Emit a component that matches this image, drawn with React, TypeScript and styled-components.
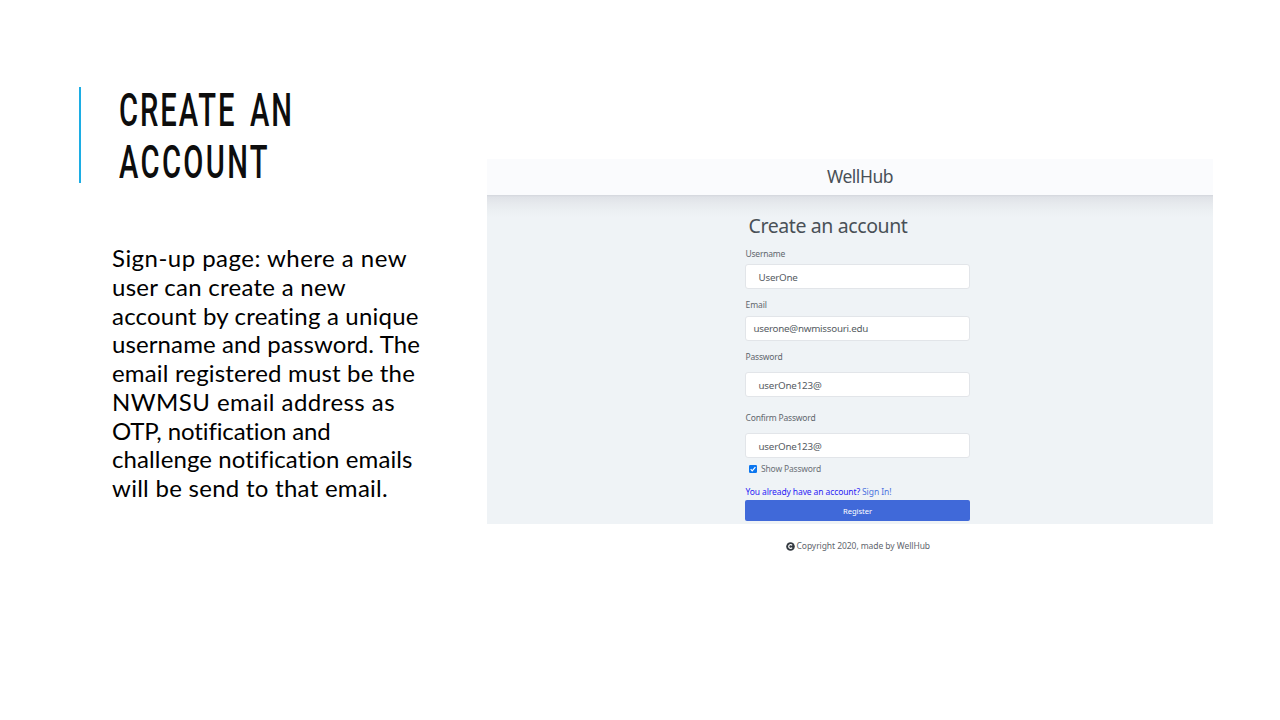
import React, { useLayoutEffect, useRef, useState } from "react";
import styled, { createGlobalStyle } from "styled-components";

const GlobalStyle = createGlobalStyle`
  *, *::before, *::after { box-sizing: border-box; }
  body { margin: 0; background: #fff; }
`;

const uiFont = `"Noto Sans", "Open Sans", sans-serif`;
const titleScale = 0.62;

const FitText = styled.span`
  display: inline-block;
  white-space: pre;
`;

/* Tracks a run of text so that it fills the given width. */
function Fit({ width, children }: { width: number; children: string }) {
  const ref = useRef<HTMLSpanElement>(null);
  const [spacing, setSpacing] = useState(0);
  useLayoutEffect(() => {
    const el = ref.current;
    if (!el) return;
    el.style.letterSpacing = "0px";
    const natural = parseFloat(getComputedStyle(el).width);
    const next = (width - natural) / children.length;
    el.style.letterSpacing = `${next}px`;
    setSpacing(next);
  }, [width, children]);
  return (
    <FitText ref={ref} style={{ letterSpacing: `${spacing}px` }}>
      {children}
    </FitText>
  );
}

const Slide = styled.main`
  display: flex;
  width: 1280px;
  height: 720px;
  overflow: hidden;
  background: #fff;
`;

const TextColumn = styled.section`
  width: 487px;
  padding: 87px 0 0 79px;
`;

const TitleBlock = styled.div`
  display: flex;
  align-items: flex-start;
  height: 96px;
  border-left: 2px solid #1cade4;
  padding-left: 38px;
`;

const Title = styled.h1`
  flex: none;
  margin: -3px 0 0;
  font: 500 47px/52px Roboto, sans-serif;
  color: #0d0d0d;
  width: 340px;
  word-spacing: 7px;
  transform: scaleX(${titleScale});
  transform-origin: 0 0;
`;

const TitleLine = styled.span`
  display: block;
  height: 52px;
`;

const Body = styled.p`
  margin: 61px 0 0 33px;
  font: 400 24px/28.75px Lato, sans-serif;
  color: #000;
`;

const BodyLine = styled.span`
  display: block;
  height: 28.75px;
`;

const Screen = styled.section`
  width: 726px;
  margin-top: 159px;
  font-family: ${uiFont};
  color: #495057;
`;

const AppHeader = styled.header`
  display: flex;
  justify-content: center;
  height: 36px;
  padding-left: 20px;
  background: #fafbfd;
  font-size: 17.5px;
  line-height: 35px;
`;

const AppBody = styled.div`
  height: 329px;
  padding: 18px 0 0 258px;
  background: linear-gradient(#d3d6dc 0, #dfe2e7 2px, #e6e9ed 8px, #ebeff2 15px, #eff3f6 23px);
`;

const Form = styled.form`
  display: flex;
  flex-direction: column;
  width: 225px;
`;

const FormTitle = styled.h2`
  margin: 0 0 0 3.5px;
  font-size: 19.5px;
  font-weight: 400;
  line-height: 26px;
  height: 27px;
`;

const Label = styled.label<{ $top: number; $gap: number }>`
  height: 12px;
  margin: ${(p) => p.$top}px 0 ${(p) => p.$gap}px;
  padding-left: 0.5px;
  font-size: 8.5px;
  line-height: 12px;
  color: #5f666d;
`;

const Field = styled.div<{ $indent: number; $line: number }>`
  height: 25px;
  padding-left: ${(p) => p.$indent}px;
  border: 1px solid #e2e5e9;
  border-radius: 3px;
  background: #fff;
  font-size: 9.8px;
  line-height: ${(p) => p.$line}px;
  color: #555b62;
`;

const CheckRow = styled.div`
  display: flex;
  align-items: center;
  gap: 4px;
  height: 12px;
  margin: 5px 0 0 4px;
  font-size: 8.5px;
  line-height: 12px;
  color: #6a7076;
`;

const Prompt = styled.div`
  height: 12px;
  margin-top: 11px;
  padding-left: 0.5px;
  font-size: 8.5px;
  line-height: 12px;
  color: #2a1cf5;
`;

const SignIn = styled.a`
  margin-left: 2px;
  color: #4a72de;
`;

const Register = styled.div`
  display: flex;
  justify-content: center;
  height: 21px;
  margin-top: 2px;
  border-radius: 2px;
  background: #4069d9;
  font-size: 7.6px;
  line-height: 23px;
  color: #fff;
`;

const Footer = styled.footer`
  display: flex;
  align-items: center;
  gap: 2px;
  height: 12px;
  margin: 16px 0 0 298.5px;
  font-size: 8.5px;
  line-height: 12px;
  color: #5f666d;
`;

const title: [string, number][] = [
  ["CREATE AN", 175],
  ["ACCOUNT", 151],
];

const body: [string, number][] = [
  ["Sign-up page: where a new", 295],
  ["user can create a new", 234],
  ["account by creating a unique", 307],
  ["username and password. The", 308],
  ["email registered must be the", 303],
  ["NWMSU email address as", 283],
  ["OTP, notification and", 219],
  ["challenge notification emails", 301],
  ["will be send to that email.", 276],
];

const fields = [
  { label: "Username", lw: 39.5, top: 8, gap: 4, value: "UserOne", vw: 39, indent: 12.5, line: 26 },
  { label: "Email", lw: 21.5, top: 10, gap: 5, value: "userone@nwmissouri.edu", vw: 114.5, indent: 7.5, line: 24 },
  { label: "Password", lw: 37, top: 10, gap: 9, value: "userOne123@", vw: 63, indent: 12.5, line: 26 },
  { label: "Confirm Password", lw: 70, top: 15, gap: 9, value: "userOne123@", vw: 63, indent: 12.5, line: 26 },
];

export default function App() {
  return (
    <>
      <GlobalStyle />
      <Slide>
        <TextColumn>
          <TitleBlock>
            <Title>
              {title.map(([text, w]) => (
                <TitleLine key={text}>
                  <Fit width={w / titleScale}>{text}</Fit>
                </TitleLine>
              ))}
            </Title>
          </TitleBlock>
          <Body>
            {body.map(([text, w]) => (
              <BodyLine key={text}>
                <Fit width={w}>{text}</Fit>
              </BodyLine>
            ))}
          </Body>
        </TextColumn>
        <Screen>
          <AppHeader>
            <Fit width={66}>WellHub</Fit>
          </AppHeader>
          <AppBody>
            <Form>
              <FormTitle>
                <Fit width={159}>Create an account</Fit>
              </FormTitle>
              {fields.map((f) => (
                <React.Fragment key={f.label}>
                  <Label $top={f.top} $gap={f.gap}>
                    <Fit width={f.lw}>{f.label}</Fit>
                  </Label>
                  <Field $indent={f.indent} $line={f.line}>
                    <Fit width={f.vw}>{f.value}</Fit>
                  </Field>
                </React.Fragment>
              ))}
              <CheckRow>
                <svg width="8" height="8" viewBox="0 0 8 8">
                  <rect width="8" height="8" rx="1.2" fill="#0b76ef" />
                  <path d="M1.7 4.2 3.2 5.8 6.4 2.2" fill="none" stroke="#fff" strokeWidth="1.2" />
                </svg>
                <Fit width={60}>Show Password</Fit>
              </CheckRow>
              <Prompt>
                <Fit width={114.5}>You already have an account?</Fit>
                <SignIn>
                  <Fit width={29.5}>Sign In!</Fit>
                </SignIn>
              </Prompt>
              <Register>
                <Fit width={29}>Register</Fit>
              </Register>
            </Form>
          </AppBody>
          <Footer>
            <svg width="9" height="9" viewBox="0 0 9 9">
              <circle cx="4.5" cy="4.5" r="4.3" fill="#343a40" />
              <path d="M6.1 3.3A1.9 1.9 0 1 0 6.1 5.7" fill="none" stroke="#fff" strokeWidth="1.2" />
            </svg>
            <Fit width={133.5}>Copyright 2020, made by WellHub</Fit>
          </Footer>
        </Screen>
      </Slide>
    </>
  );
}
